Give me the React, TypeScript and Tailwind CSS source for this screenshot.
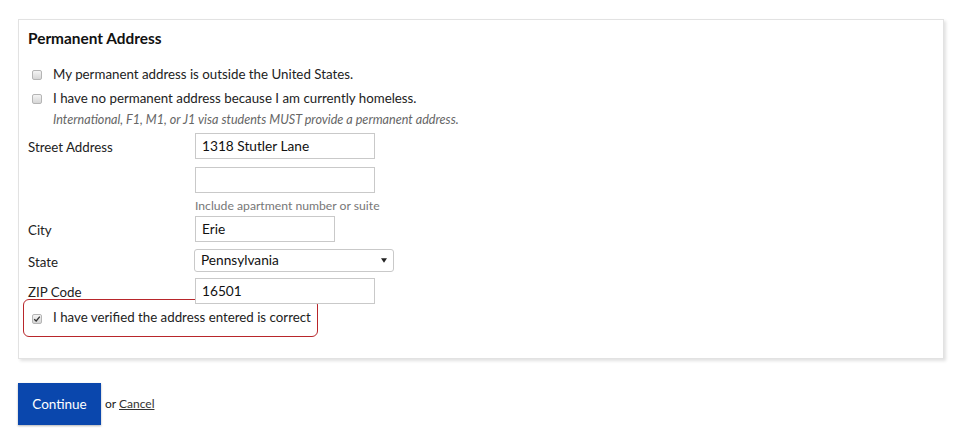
import React from "react";

function Box({ checked = false }: { checked?: boolean }) {
  return (
    <span className="mt-[1px] flex h-[10px] w-[10px] shrink-0 items-center justify-center rounded-[2px] border border-[#b5b5b5] bg-gradient-to-b from-[#f4f4f4] to-[#d6d6d6]">
      {checked && (
        <svg viewBox="0 0 10 10" className="h-[8px] w-[8px]">
          <path d="M1.5 5.2 L4 7.5 L8.5 2" fill="none" stroke="#333" strokeWidth="1.6" />
        </svg>
      )}
    </span>
  );
}

function Field({ label, children }: { label: string; children: React.ReactNode }) {
  return (
    <div className="flex items-center">
      <div className="w-[167px] pt-[2px] text-[13.3px] leading-[16px] text-[#222]">{label}</div>
      {children}
    </div>
  );
}

function TextInput({ value, width }: { value: string; width: string }) {
  return (
    <div
      className={`flex h-[26px] items-center border border-[#c9c9c9] bg-white px-[6px] text-[13.7px] text-[#111] ${width}`}
    >
      {value}
    </div>
  );
}

export default function App() {
  return (
    <div className="min-h-[438px] w-[960px] bg-white pl-[18px] pt-[19px] font-['Lato',sans-serif] text-[#222]">
      <div className="h-[340px] w-[926px] border border-[#e2e2e2] bg-white pl-[9px] pt-[8px] shadow-[2px_2px_3px_rgba(0,0,0,0.12)]">
        <h2 className="text-[15.4px] font-bold leading-[20px] text-[#111]">Permanent Address</h2>

        <div className="mt-[19px] flex flex-col gap-[10px] pl-[4px]">
          <label className="flex items-center gap-[11px] text-[13.3px] leading-[14px]">
            <Box />
            <span>My permanent address is outside the United States.</span>
          </label>
          <label className="flex items-center gap-[11px] text-[13.3px] leading-[14px]">
            <Box />
            <span>I have no permanent address because I am currently homeless.</span>
          </label>
        </div>
        <p className="mt-[8px] pl-[25px] text-[12.6px] italic leading-[14px] text-[#666]">
          International, F1, M1, or J1 visa students MUST provide a permanent address.
        </p>

        <div className="mt-[6px] flex flex-col">
          <Field label="Street Address">
            <TextInput value="1318 Stutler Lane" width="w-[180px]" />
          </Field>
          <div className="mt-[8px] pl-[167px]">
            <TextInput value="" width="w-[180px]" />
          </div>
          <div className="mt-[6px] pl-[167px] text-[12.2px] leading-[14px] text-[#777]">
            Include apartment number or suite
          </div>
          <div className="mt-[3px]">
            <Field label="City">
              <TextInput value="Erie" width="w-[140px]" />
            </Field>
          </div>
          <div className="mt-[7px]">
            <Field label="State">
              <div className="-ml-[1px] flex h-[23px] w-[200px] items-center justify-between rounded-[3px] border border-[#c9c9c9] bg-white pl-[6px] pr-[6px] text-[13.7px] text-[#111]">
                <span>Pennsylvania</span>
                <svg viewBox="0 0 8 6" className="h-[5px] w-[6px]">
                  <path d="M0 0 H8 L4 6 Z" fill="#222" />
                </svg>
              </div>
            </Field>
          </div>
          <div className="mt-[6px]">
            <Field label="ZIP Code">
              <TextInput value="16501" width="w-[180px]" />
            </Field>
          </div>
        </div>

        <div className="-ml-[5px] -mt-[5px] flex h-[38px] w-[295px] items-center gap-[11px] rounded-[6px] border-[1.5px] border-[#b8262b] pl-[8px] text-[13.3px]">
          <Box checked />
          <span className="whitespace-nowrap">I have verified the address entered is correct</span>
        </div>
      </div>

      <div className="mt-[24px] flex items-center">
        <button className="h-[42px] w-[83px] bg-[#0a47ad] text-[13.5px] text-white shadow-[0_1px_2px_rgba(0,0,0,0.3)]">
          Continue
        </button>
        <span className="ml-[4px] text-[12px] text-[#222]">
          or{" "}
          <a className="text-[#333] underline" href="#">
            Cancel
          </a>
        </span>
      </div>
    </div>
  );
}
